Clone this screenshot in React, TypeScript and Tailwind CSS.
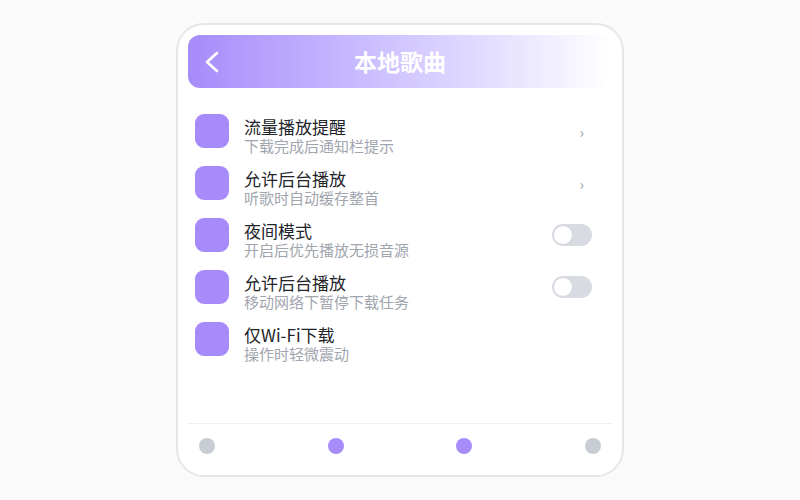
import React from 'react'

interface Row {
  title:    string
  subtitle: string
  trailing: 'chevron' | 'toggle' | 'none'
}

const rows: Row[] = [
  { title: '流量播放提醒', subtitle: '下载完成后通知栏提示',   trailing: 'chevron' },
  { title: '允许后台播放', subtitle: '听歌时自动缓存整首',     trailing: 'chevron' },
  { title: '夜间模式',     subtitle: '开启后优先播放无损音源', trailing: 'toggle' },
  { title: '允许后台播放', subtitle: '移动网络下暂停下载任务', trailing: 'toggle' },
  { title: '仅Wi-Fi下载',  subtitle: '操作时轻微震动',         trailing: 'none' },
]

const dots = ['bg-[#c8ccd3]', 'bg-[#a78bfa]', 'bg-[#a78bfa]', 'bg-[#c8ccd3]']

function Toggle() {
  return (
    <div className="w-[40px] h-[22px] rounded-full bg-[#d9dbe2] flex items-center px-[1px]">
      <div className="w-[20px] h-[20px] rounded-full bg-white border border-[#d4d6dd]" />
    </div>
  )
}

export default function App() {
  return (
    <div className="w-[800px] h-[500px] bg-[#fafafb] flex items-center justify-center font-['Noto_Sans_CJK_SC',sans-serif]">
      <div className="w-[448px] h-[454px] rounded-[28px] border-2 border-[#e6e7eb] bg-white p-[10px] flex flex-col">
        {/* Header */}
        <div className="h-[53px] rounded-[12px] bg-gradient-to-r from-[#a78bfa] to-white grid grid-cols-[1fr_auto_1fr] items-center">
          <div className="pl-[17px] flex items-center">
            <svg width="14" height="22" viewBox="0 0 14 22" fill="none">
              <polyline points="12,2 2,11 12,20" stroke="white" strokeWidth="2.6" strokeLinecap="round" strokeLinejoin="round" />
            </svg>
          </div>
          <h1 className="text-[23px] leading-none font-bold text-white">本地歌曲</h1>
          <div />
        </div>

        {/* List */}
        <div className="mt-[26px] flex flex-col pl-[7px] pr-[20px]">
          {rows.map((row, i) => (
            <div key={i} className="h-[52px] flex items-start">
              <div className="w-[34px] h-[34px] rounded-[9px] bg-[#a78bfa] shrink-0" />
              <div className="ml-[15px] mt-[3px] flex-1 min-w-0">
                <p className="text-[17px] leading-[20px] text-[#222429]">{row.title}</p>
                <p className="text-[15px] leading-[17px] text-[#a1a5ae]">{row.subtitle}</p>
              </div>
              <div className="h-[34px] flex items-center justify-end">
                {row.trailing === 'chevron' && (
                  <span className="text-[15px] leading-none text-[#9ca3af] pr-[8px]">›</span>
                )}
                {row.trailing === 'toggle' && <Toggle />}
              </div>
            </div>
          ))}
        </div>

        {/* Footer dots */}
        <div className="mt-auto border-t border-[#eef0f3] h-[42px] pt-[3px] px-[11px] flex items-center justify-between">
          {dots.map((c, i) => (
            <div key={i} className={`w-[16px] h-[16px] rounded-full ${c}`} />
          ))}
        </div>
      </div>
    </div>
  )
}
